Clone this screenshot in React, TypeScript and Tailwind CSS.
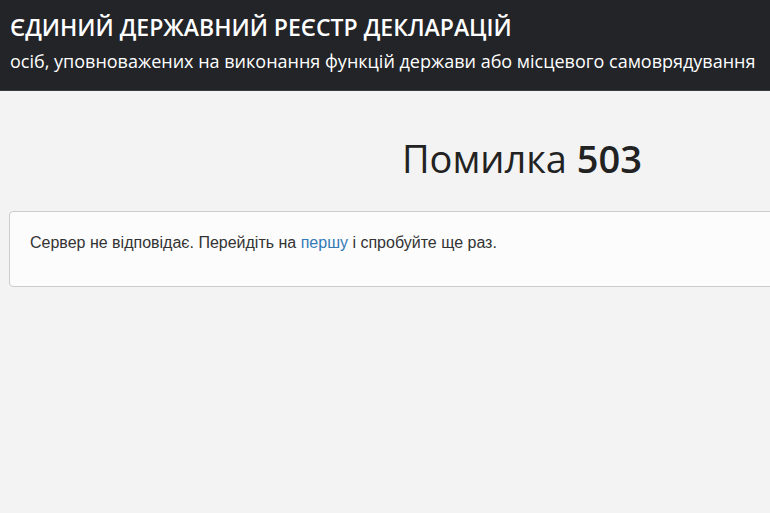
import React from 'react';

const App: React.FC = () => {
    return (
        <div className="min-h-[513px] w-full bg-[#f3f3f3] overflow-hidden" style={{ fontFamily: '"Open Sans", sans-serif' }}>

            <header className="h-[91px] bg-[#222428] border-b border-[#3a3c40] px-[10px] pt-[11px]">
                <h1 className="text-[23px] leading-[32px] font-semibold text-white whitespace-nowrap">
                    ЄДИНИЙ ДЕРЖАВНИЙ РЕЄСТР ДЕКЛАРАЦІЙ
                </h1>
                <p className="text-[18px] leading-[26px] text-white whitespace-nowrap mt-[5px]">
                    осіб, уповноважених на виконання функцій держави або місцевого самоврядування
                </p>
            </header>

            <main className="pl-[9px] w-[1035px]">
                <h2 className="text-center text-[38px] leading-[52px] text-[#222] mt-[41px]">
                    Помилка <span className="font-semibold">503</span>
                </h2>
                <div
                    className="mt-[27px] h-[76px] bg-[#fcfcfc] border border-[#cccccc] rounded-[4px] px-[20px] pt-[20px] text-[16px] leading-[22px] text-[#333]"
                    style={{ fontFamily: '"Liberation Sans", Arial, sans-serif' }}
                >
                    Сервер не відповідає. Перейдіть на <a href="#" className="text-[#337ab7]">першу</a> і спробуйте ще раз.
                </div>
            </main>
        </div>
    );
};

export default App;
